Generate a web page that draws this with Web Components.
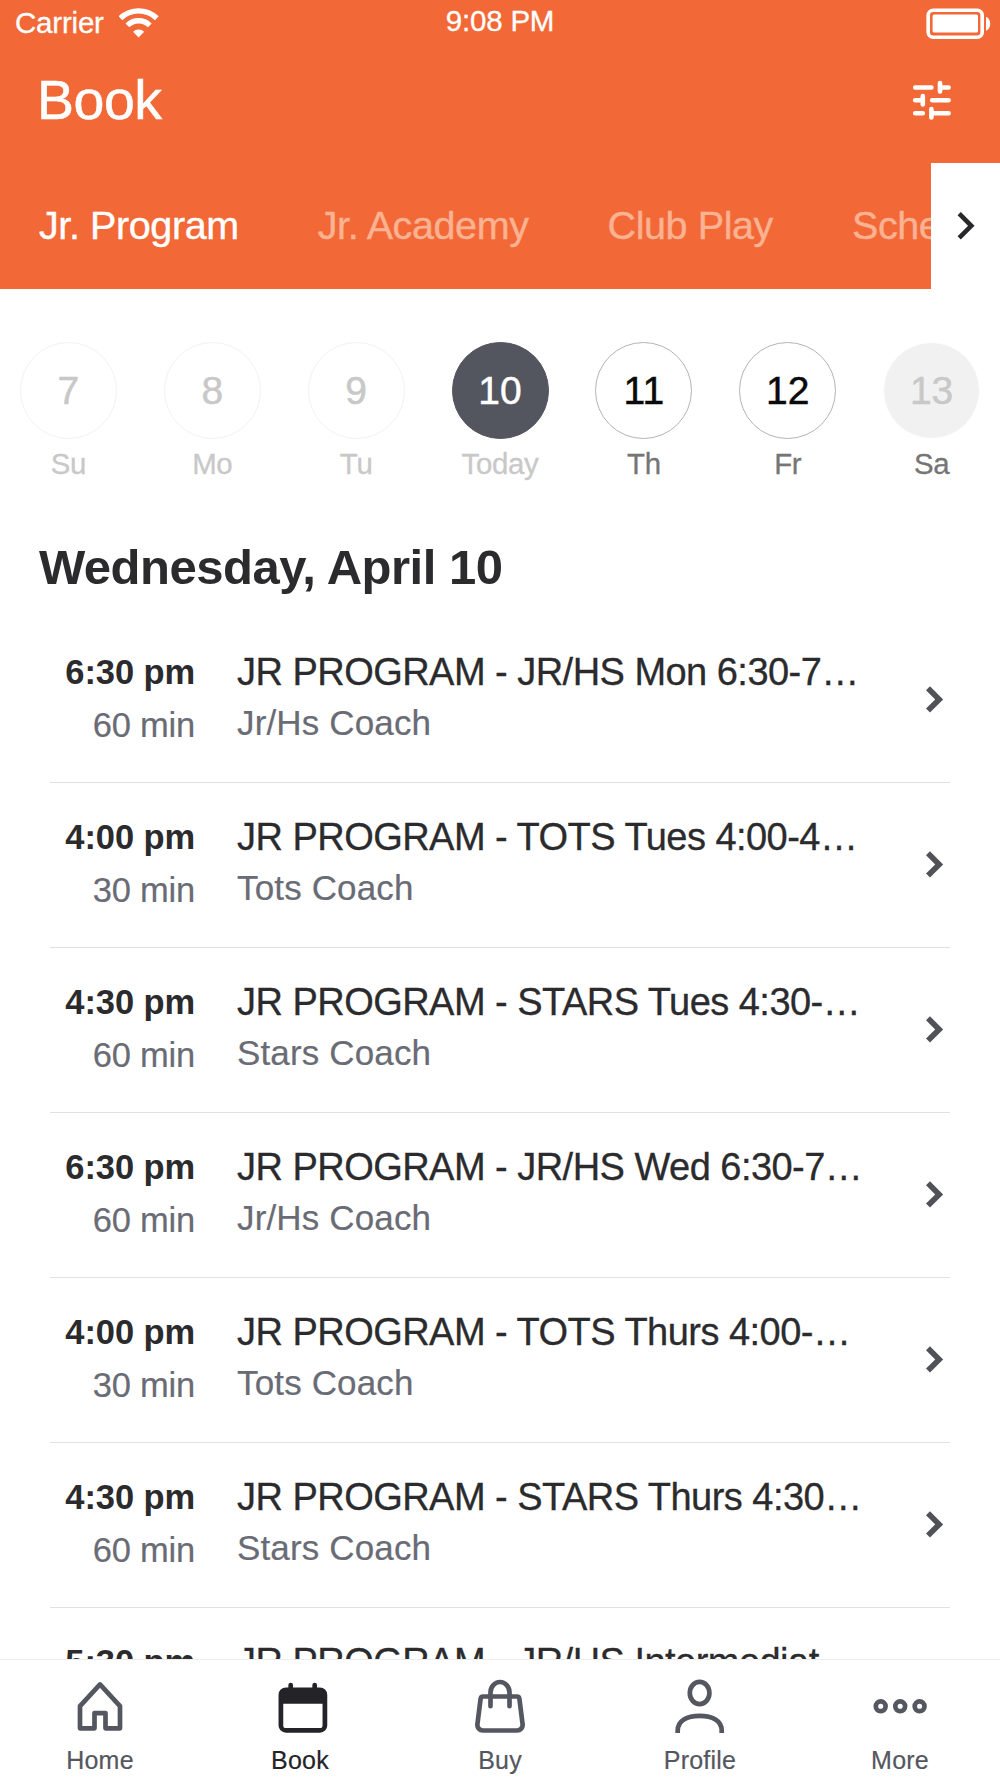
<!DOCTYPE html>
<html lang="en">
<head>
<meta charset="utf-8">
<meta name="viewport" content="width=1000">
<title>Book</title>
<style>
  html, body {
    margin: 0;
    padding: 0;
  }

  body {
    width: 1000px;
    height: 1778px;
    overflow: hidden;
    background: #fff;
    font-family: "Liberation Sans", Arial, sans-serif;
  }
</style>
</head>
<body>
<booking-app></booking-app>

<script>
const categories = ["Jr. Program", "Jr. Academy", "Club Play", "Sche"];

const days = [
  { date: "7", name: "Su", state: "past" },
  { date: "8", name: "Mo", state: "past" },
  { date: "9", name: "Tu", state: "past" },
  { date: "10", name: "Today", state: "selected" },
  { date: "11", name: "Th", state: "open" },
  { date: "12", name: "Fr", state: "open" },
  { date: "13", name: "Sa", state: "closed" },
];

const classes = [
  { time: "6:30 pm", length: "60 min", title: "JR PROGRAM - JR/HS Mon 6:30-7…", coach: "Jr/Hs Coach" },
  { time: "4:00 pm", length: "30 min", title: "JR PROGRAM - TOTS Tues 4:00-4…", coach: "Tots Coach" },
  { time: "4:30 pm", length: "60 min", title: "JR PROGRAM - STARS Tues 4:30-…", coach: "Stars Coach" },
  { time: "6:30 pm", length: "60 min", title: "JR PROGRAM - JR/HS Wed 6:30-7…", coach: "Jr/Hs Coach" },
  { time: "4:00 pm", length: "30 min", title: "JR PROGRAM - TOTS Thurs 4:00-…", coach: "Tots Coach" },
  { time: "4:30 pm", length: "60 min", title: "JR PROGRAM - STARS Thurs 4:30…", coach: "Stars Coach" },
  { time: "5:30 pm", title: "JR PROGRAM - JR/HS Intermediat…" },
];

// tab icons share a 60x60 box
const tabIcons = {
  home: `<path d="M10 26.2 L30 4.4 L50 26.2 V48.3 H35.5 V33.2 H24.5 V48.3 H10 Z"/>`,
  book: `<path d="M20.7 5v6M44.7 5v6" stroke-linecap="round"/>
    <rect x="10.9" y="9.8" width="44" height="40.6" rx="5"/>
    <path d="M10.9 10.2h44v13.6h-44z" fill="currentColor" stroke="none"/>`,
  buy: `<path d="M13.2 16.5h33.6a2.6 2.6 0 0 1 2.6 2.3l3.2 25.5a5.5 5.5 0 0 1-5.5 6.2H12.9a5.5 5.5 0 0 1-5.5-6.2l3.2-25.5a2.6 2.6 0 0 1 2.6-2.3z"/>
    <path d="M20.5 26.2V12.5a9.5 10.5 0 0 1 19 0V26.2" stroke-linecap="round"/>`,
  profile: `<ellipse cx="29.6" cy="13" rx="9.8" ry="11.2"/>
    <path d="M7.7 53V50.5C7.7 40.5 17 35.8 29.7 35.8S51.7 40.5 51.7 50.5V53"/>`,
  more: `<circle cx="10.7" cy="26.3" r="4.9"/><circle cx="30.2" cy="26.3" r="4.9"/><circle cx="49.6" cy="26.3" r="4.9"/>`,
};

class StatusBar extends HTMLElement {
  constructor() {
    super();
    this.attachShadow({ mode: "open" });
  }

  connectedCallback() {
    this.shadowRoot.innerHTML = `
      <style>
        :host {
          display: grid;
          grid-template-columns: 1fr auto 1fr;
          height: 46px;
          box-sizing: border-box;
          padding: 0 8px 0 15px;
          color: #fff;
          font-size: 29.5px;
          line-height: 34px;
          letter-spacing: -.2px;
          -webkit-text-stroke: .3px;
        }

        .carrier {
          display: flex;
          gap: 15px;
          padding-top: 6px;
        }

        .wifi {
          margin-top: 2px;
        }

        .time {
          padding-top: 4px;
          margin-left: -7px;
        }

        .battery {
          justify-self: end;
          margin-top: 8px;
        }

        svg {
          display: block;
        }
      </style>

      <div class="carrier">
        <span>Carrier</span>
        <svg class="wifi" width="40" height="30" viewBox="0 0 40 30" fill="none" stroke="#fff">
          <path d="M1.4 10.2a26.2 26.2 0 0 1 36.4 0" stroke-width="5.4"/>
          <path d="M8.4 17.4a15.8 15.8 0 0 1 22.4 0" stroke-width="5.4"/>
          <path d="M19.6 29.4 14 23.8a8 8 0 0 1 11.2 0z" fill="#fff" stroke="none"/>
        </svg>
      </div>
      <span class="time">9:08 PM</span>
      <svg class="battery" width="66" height="32" viewBox="0 0 66 32">
        <rect x="2.2" y="2.2" width="54" height="27" rx="5" fill="none" stroke="#fff" stroke-width="3.6"/>
        <rect x="6.6" y="6.6" width="45.4" height="18" rx="1.5" fill="#fff"/>
        <path d="M60 8.7c5.6 2 5.6 12 0 14z" fill="#fff"/>
      </svg>
    `;
  }
}

class PageTitle extends HTMLElement {
  constructor() {
    super();
    this.attachShadow({ mode: "open" });
  }

  connectedCallback() {
    this.shadowRoot.innerHTML = `
      <style>
        :host {
          display: flex;
          justify-content: space-between;
          align-items: center;
          height: 117px;
          box-sizing: border-box;
          padding: 0 47px 7px 37px;
          color: #fff;
        }

        h1 {
          margin: -2px 0 0;
          font-size: 55.5px;
          font-weight: normal;
          line-height: 64px;
          letter-spacing: -.5px;
          -webkit-text-stroke: .5px #fff;
        }

        svg {
          display: block;
          margin-top: -3px;
        }
      </style>

      <h1><slot></slot></h1>
      <svg width="41" height="41" viewBox="0 0 41 41" fill="none" stroke="#fff" stroke-width="4.6" stroke-linecap="round">
        <path d="M3.2 8.5H19.4M28 4v8.4M28 8.5h8.6"/>
        <path d="M3.2 21.3h7.6M10.8 17v8.4M20.2 21.3h16.4"/>
        <path d="M3.2 34.2h7.6M19.4 30v8.4M19.4 34.2h17.2"/>
      </svg>
    `;
  }
}

class CategoryTabs extends HTMLElement {
  constructor() {
    super();
    this.attachShadow({ mode: "open" });
  }

  connectedCallback() {
    const tabs = categories
      .map((name, i) => `<span class="${i === 0 ? "active" : ""}">${name}</span>`)
      .join("");

    this.shadowRoot.innerHTML = `
      <style>
        :host {
          display: flex;
          height: 126px;
        }

        .tabs {
          flex: 1;
          min-width: 0;
          display: flex;
          align-items: center;
          gap: 79px;
          overflow: hidden;
          padding: 0 0 2px 39px;
          box-sizing: border-box;
          font-size: 39.5px;
          letter-spacing: -.4px;
          white-space: nowrap;
          color: #fab292;
          -webkit-text-stroke: .4px;
        }

        .active {
          color: #fff;
        }

        .next {
          width: 69px;
          display: flex;
          align-items: center;
          justify-content: center;
          background: #fff;
        }
      </style>

      <div class="tabs">${tabs}</div>
      <div class="next">
        <svg width="20" height="30" viewBox="0 0 20 30" fill="none" stroke="#28282b" stroke-width="4.6">
          <path d="M3.2 2.7 15.3 14.8 3.2 26.9"/>
        </svg>
      </div>
    `;
  }
}

class DayItem extends HTMLElement {
  constructor() {
    super();
    this.attachShadow({ mode: "open" });
  }

  connectedCallback() {
    this.shadowRoot.innerHTML = `
      <style>
        :host {
          display: flex;
          flex-direction: column;
          align-items: center;
          flex: 1;
          color: #c8c8c8;
        }

        .circle {
          width: 97px;
          height: 97px;
          box-sizing: border-box;
          display: flex;
          align-items: center;
          justify-content: center;
          border: 1px solid #f2f2f2;
          border-radius: 50%;
          font-size: 39px;
          -webkit-text-stroke: .5px;
        }

        .name {
          margin-top: 8px;
          font-size: 29.4px;
          line-height: 34px;
          letter-spacing: -.3px;
          -webkit-text-stroke: .3px;
        }

        :host([state="selected"]) .circle {
          background: #53555f;
          border-color: #53555f;
          color: #fff;
        }

        :host([state="open"]) .circle {
          border-color: #b4b4b4;
          color: #0a0a0a;
        }

        :host([state="closed"]) .circle {
          background: #f1f1f1;
          border-color: #fff;
        }

        :host([state="open"]) .name,
        :host([state="closed"]) .name {
          color: #757575;
        }
      </style>

      <div class="circle">${this.getAttribute("date")}</div>
      <div class="name"><slot></slot></div>
    `;
  }
}

class WeekStrip extends HTMLElement {
  constructor() {
    super();
    this.attachShadow({ mode: "open" });
  }

  connectedCallback() {
    this.shadowRoot.innerHTML = `
      <style>
        :host {
          display: flex;
          margin: 53px -3.5px 0;
        }
      </style>

      ${days
        .map((day) => `<day-item date="${day.date}" state="${day.state}">${day.name}</day-item>`)
        .join("")}
    `;
  }
}

class ClassRow extends HTMLElement {
  constructor() {
    super();
    this.attachShadow({ mode: "open" });
  }

  connectedCallback() {
    this.shadowRoot.innerHTML = `
      <style>
        :host {
          display: flex;
          height: 165px;
          box-sizing: border-box;
          margin: 0 50px;
          border-bottom: 1px solid #e1e1e3;
          white-space: nowrap;
          color: #2b2b2d;
        }

        .when {
          width: 145px;
          padding-top: 34px;
          text-align: right;
        }

        .time {
          font-size: 34.5px;
          font-weight: bold;
          line-height: 40px;
          letter-spacing: -.1px;
        }

        .length {
          margin-top: 13px;
          font-size: 34.5px;
          line-height: 40px;
          letter-spacing: -.2px;
          color: #696b75;
          -webkit-text-stroke: .2px;
        }

        .what {
          flex: 1;
          padding: 33px 0 0 42px;
        }

        .title {
          font-size: 38px;
          line-height: 42px;
          letter-spacing: -.53px;
          -webkit-text-stroke: .3px;
        }

        .coach {
          margin-top: 10px;
          font-size: 35px;
          line-height: 40px;
          letter-spacing: .15px;
          color: #696b75;
          -webkit-text-stroke: .2px;
        }

        svg {
          margin: 67px 5px 0 0;
        }
      </style>

      <div class="when">
        <div class="time"><slot name="time"></slot></div>
        <div class="length"><slot name="length"></slot></div>
      </div>
      <div class="what">
        <div class="title"><slot name="title"></slot></div>
        <div class="coach"><slot name="coach"></slot></div>
      </div>
      <svg width="20" height="30" viewBox="0 0 20 30" fill="none" stroke="#505257" stroke-width="5.6">
        <path d="M3 3.2 14.2 14.4 3 25.6"/>
      </svg>
    `;
  }
}

class ClassList extends HTMLElement {
  constructor() {
    super();
    this.attachShadow({ mode: "open" });
  }

  connectedCallback() {
    this.shadowRoot.innerHTML = `
      <style>
        :host {
          display: block;
          flex: 1;
          min-height: 0;
          overflow: hidden;
        }

        h2 {
          margin: 0;
          padding: 58px 0 0 39px;
          height: 137px;
          box-sizing: border-box;
          font-size: 49px;
          line-height: 56px;
          letter-spacing: -.5px;
          color: #2b2b2d;
        }
      </style>

      <h2>Wednesday, April 10</h2>
      ${classes
        .map(
          (item) => `
            <class-row>
              <span slot="time">${item.time}</span>
              ${item.length ? `<span slot="length">${item.length}</span>` : ""}
              <span slot="title">${item.title}</span>
              ${item.coach ? `<span slot="coach">${item.coach}</span>` : ""}
            </class-row>`
        )
        .join("")}
    `;
  }
}

class TabItem extends HTMLElement {
  constructor() {
    super();
    this.attachShadow({ mode: "open" });
  }

  connectedCallback() {
    this.shadowRoot.innerHTML = `
      <style>
        :host {
          display: flex;
          flex-direction: column;
          align-items: center;
          flex: 1;
          padding-top: 20px;
          color: #555760;
        }

        :host([active]) {
          color: #232328;
        }

        svg {
          display: block;
          overflow: visible;
        }

        span {
          margin-top: 6px;
          font-size: 25px;
          line-height: 29px;
          letter-spacing: .2px;
          -webkit-text-stroke: .2px;
        }
      </style>

      <svg width="60" height="60" viewBox="0 0 60 60" fill="none" stroke="currentColor" stroke-width="4.7" stroke-linejoin="round">
        ${tabIcons[this.getAttribute("icon")]}
      </svg>
      <span><slot></slot></span>
    `;
  }
}

class TabBar extends HTMLElement {
  constructor() {
    super();
    this.attachShadow({ mode: "open" });
  }

  connectedCallback() {
    this.shadowRoot.innerHTML = `
      <style>
        :host {
          display: flex;
          height: 119px;
          box-sizing: border-box;
          border-top: 1px solid #ededee;
          background: #fff;
        }
      </style>

      <tab-item icon="home">Home</tab-item>
      <tab-item icon="book" active>Book</tab-item>
      <tab-item icon="buy">Buy</tab-item>
      <tab-item icon="profile">Profile</tab-item>
      <tab-item icon="more">More</tab-item>
    `;
  }
}

class BookingApp extends HTMLElement {
  constructor() {
    super();
    this.attachShadow({ mode: "open" });
  }

  connectedCallback() {
    this.shadowRoot.innerHTML = `
      <style>
        :host {
          display: flex;
          flex-direction: column;
          width: 1000px;
          height: 1778px;
          overflow: hidden;
        }

        header {
          background: #f26937;
        }
      </style>

      <header>
        <status-bar></status-bar>
        <page-title>Book</page-title>
        <category-tabs></category-tabs>
      </header>
      <week-strip></week-strip>
      <class-list></class-list>
      <tab-bar></tab-bar>
    `;
  }
}

customElements.define("status-bar", StatusBar);
customElements.define("page-title", PageTitle);
customElements.define("category-tabs", CategoryTabs);
customElements.define("day-item", DayItem);
customElements.define("week-strip", WeekStrip);
customElements.define("class-row", ClassRow);
customElements.define("class-list", ClassList);
customElements.define("tab-item", TabItem);
customElements.define("tab-bar", TabBar);
customElements.define("booking-app", BookingApp);
</script>
</body>
</html>
